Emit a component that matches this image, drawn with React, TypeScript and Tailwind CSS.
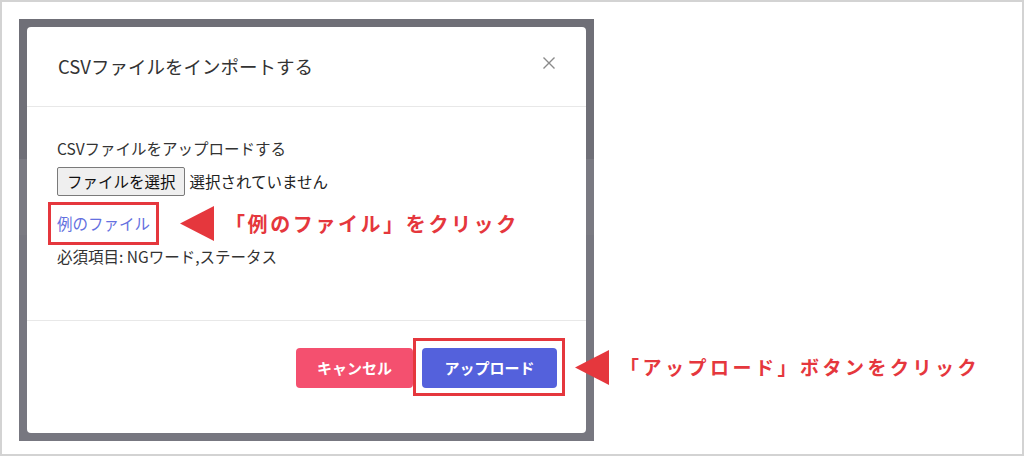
import type { ReactNode } from 'react';

const jp = { fontFamily: '"Noto Sans CJK JP", "Noto Sans", sans-serif' };

function LeftArrow({ className }: { className: string }) {
  return (
    <svg viewBox="0 0 34 35" className={className} preserveAspectRatio="none">
      <polygon points="0,17.5 34,0 34,35" fill="#e5373d" />
    </svg>
  );
}

function Callout({ children, className }: { children: ReactNode; className: string }) {
  return <span className={`font-bold text-[#e5373d] whitespace-nowrap ${className}`}>{children}</span>;
}

export default function App() {
  return (
    <div
      className="relative w-[1024px] h-[456px] border-2 border-[#d3d3d3] bg-white pl-[17px] pt-[17px]"
      style={jp}
    >
      {/* dimmed backdrop with the modal on it */}
      <div className="w-[575px] h-[422px] p-[8px] bg-[linear-gradient(#6f6f77_0,#6f6f77_140px,#7a7a82_140px,#7a7a82_216px,#777780_216px)]">
        <div className="flex flex-col h-full bg-white rounded-[4px] text-[#333]">
          <div className="flex items-center justify-between h-[80px] pl-[31px] pr-[31px] border-b border-[#e8e8e8]">
            <h2 className="text-[18.5px] leading-none font-normal">CSVファイルをインポートする</h2>
            <svg viewBox="0 0 12 12" className="w-[12px] h-[12px] mb-[8px]">
              <path d="M0.5 0.5 L11.5 11.5 M11.5 0.5 L0.5 11.5" stroke="#8a8a8a" strokeWidth="1.4" />
            </svg>
          </div>

          <div className="flex-1 pl-[30px] pt-[29px] text-[15.5px]">
            <p className="leading-[24px]">CSVファイルをアップロードする</p>
            <div className="flex items-center mt-[7px]">
              <button className="h-[29px] pl-[9px] pr-[8px] border border-[#7a7a7a] bg-[#efefef] rounded-[2px] text-[#111] text-[15.5px] leading-none">
                ファイルを選択
              </button>
              <span className="ml-[5px] text-[#222]">選択されていません</span>
            </div>
            <div className="flex items-center mt-[6px]">
              <div className="-ml-[9px] border-[3px] border-[#e5373d] pl-[6px] pr-[6px] py-[6px]">
                <a className="block leading-[25px] text-[#6470e0]">例のファイル</a>
              </div>
              <LeftArrow className="ml-[21px] w-[34px] h-[35px] shrink-0" />
              <Callout className="ml-[11px] text-[20px] tracking-[2.6px]">「例のファイル」をクリック</Callout>
            </div>
            <p className="leading-[22px]">必須項目: NGワード,ステータス</p>
          </div>

          <div className="flex items-start justify-end h-[113px] pt-[17px] pr-[21px] border-t border-[#e8e8e8]">
            <button className="mt-[10px] w-[117px] h-[40px] rounded-[4px] bg-[#f4506f] text-white text-[15px] font-bold">
              キャンセル
            </button>
            <div className="border-[3px] border-[#e5373d] pl-[6px] pr-[5px] pt-[7px] pb-[5px]">
              <button className="block w-[135px] h-[40px] rounded-[4px] bg-[#5461dc] text-white text-[15px] font-bold">
                アップロード
              </button>
            </div>
          </div>
        </div>
      </div>

      {/* callout for the upload button, drawn over the backdrop edge */}
      <div className="absolute left-[573px] top-[348px] flex items-center h-[35px]">
        <LeftArrow className="w-[34px] h-[35px] shrink-0" />
        <Callout className="ml-[11px] text-[19px] tracking-[3.5px]">「アップロード」ボタンをクリック</Callout>
      </div>
    </div>
  );
}
